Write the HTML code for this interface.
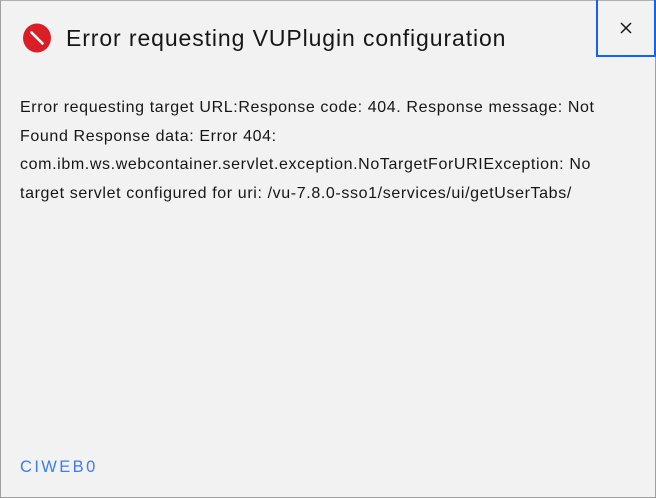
<!DOCTYPE html>
<html><head><style>
html,body{margin:0;padding:0;}
body{width:656px;height:498px;background:#f2f2f2;position:relative;overflow:hidden;font-family:"Liberation Sans",sans-serif;}
.frame{position:absolute;left:0;top:0;width:654px;height:496px;border:1px solid #a0a0a0;border-top-color:#b0b0b0;}
.close{position:absolute;left:596px;top:0;width:56px;height:55px;border:2px solid #0f62fe;border-top:none;box-sizing:content-box;}
.title{position:absolute;left:66px;top:25px;font-size:23px;letter-spacing:0.9px;color:#161616;white-space:nowrap;}
.body{position:absolute;left:20px;top:94px;font-size:16px;letter-spacing:0.62px;line-height:28.7px;color:#161616;white-space:nowrap;}
.code{position:absolute;left:20px;top:458px;font-size:16.5px;letter-spacing:2.4px;color:#3d7bf7;}
</style></head><body>
<div class="frame"></div>
<svg style="position:absolute;left:22px;top:23px" width="30" height="30" viewBox="0 0 30 30">
<ellipse cx="15" cy="15" rx="14" ry="14.5" fill="#da1e28"/>
<line x1="9.5" y1="9.5" x2="20.5" y2="20.5" stroke="#fff" stroke-width="2.6" stroke-linecap="round"/>
</svg>
<div class="title">Error requesting VUPlugin configuration</div>
<div class="close"><svg style="position:absolute;left:22px;top:22px" width="12" height="12" viewBox="0 0 12 12"><path d="M1 1L11 11M11 1L1 11" stroke="#161616" stroke-width="1.5"/></svg></div>
<div class="body">Error requesting target URL:Response code: 404. Response message: Not<br>Found Response data: Error 404:<br>com.ibm.ws.webcontainer.servlet.exception.NoTargetForURIException: No<br>target servlet configured for uri: /vu-7.8.0-sso1/services/ui/getUserTabs/</div>
<div class="code">CIWEB0</div>
</body></html>
